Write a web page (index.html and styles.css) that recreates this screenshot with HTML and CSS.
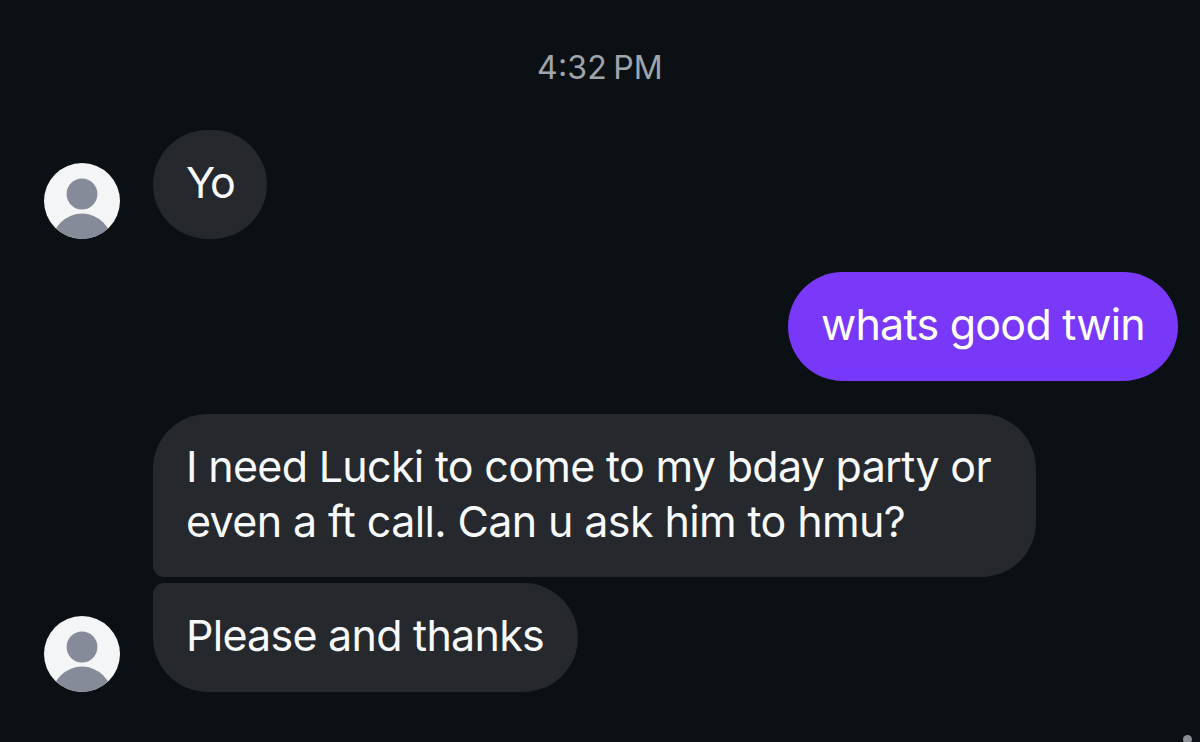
FILE: index.html
```html
<!DOCTYPE html>
<html lang="en">
<head>
    <meta charset="UTF-8">
    <title>Messages</title>
    <link rel="stylesheet" href="styles.css">
</head>
<body>

    <main class="chat">
        <div class="timestamp">4<span class="colon">:</span>32 PM</div>

        <div class="row">
            <svg class="avatar" viewBox="0 0 76 76">
                <clipPath id="circle"><circle cx="38" cy="38" r="38"/></clipPath>
                <g clip-path="url(#circle)">
                    <rect class="avatar-bg" width="76" height="76"/>
                    <circle class="avatar-person" cx="38" cy="31" r="15.4"/>
                    <circle class="avatar-person" cx="38" cy="80.8" r="30.2"/>
                </g>
            </svg>
            <div class="bubble short"><span class="yo">Yo</span></div>
        </div>

        <div class="row sent">
            <div class="bubble">whats good twin</div>
        </div>

        <div class="row">
            <div class="bubble first">I need Lucki to come to my bday party or<br><span class="second-line">even a ft call. Can u ask him to hmu?</span></div>
        </div>

        <div class="row">
            <svg class="avatar" viewBox="0 0 76 76">
                <g clip-path="url(#circle)">
                    <rect class="avatar-bg" width="76" height="76"/>
                    <circle class="avatar-person" cx="38" cy="31" r="15.4"/>
                    <circle class="avatar-person" cx="38" cy="80.8" r="30.2"/>
                </g>
            </svg>
            <div class="bubble last">Please and thanks</div>
        </div>

        <span class="status-dot"></span>
    </main>

</body>
</html>
```

FILE: styles.css
```css
* {
    box-sizing: border-box;
}

body {
    margin: 0;
    background-color: #0b1014;
    color: #f8f9fb;
    font-family: Inter, "Liberation Sans", sans-serif;
}

.chat {
    position: relative;
    width: 1200px;
    height: 742px;
    padding: 48px 22px 0 44px;
    overflow: hidden;
}

.timestamp {
    height: 82px;
    margin-left: -22px;
    color: #a0a5ad;
    font-size: 32px;
    line-height: 40px;
    letter-spacing: 0.2px;
    word-spacing: -3px;
    text-align: center;
}

.colon {
    font-feature-settings: "case";
}

.row {
    display: flex;
    align-items: flex-end;
    gap: 33px;
    margin-bottom: 33px;
    padding-left: 109px;
}

.row:has(.avatar) {
    padding-left: 0;
}

.sent {
    justify-content: flex-end;
}

.avatar {
    width: 76px;
    height: 76px;
    flex: none;
}

.avatar-bg {
    fill: #f3f5f7;
}

.avatar-person {
    fill: #858b98;
}

.bubble {
    width: 425px;
    padding: 25px 33px 29px;
    border-radius: 54.5px;
    background-color: #25282d;
    font-size: 43px;
    line-height: 55px;
    letter-spacing: -0.75px;
    white-space: nowrap;
}

.short {
    width: 114px;
}

.yo {
    letter-spacing: -2px;
}

.sent .bubble {
    width: 390px;
    background: linear-gradient(#7c38f8, #7638fa);
    color: #fff;
}

.first {
    width: 883px;
    height: 163px;
    border-bottom-left-radius: 11px;
    letter-spacing: -0.7px;
}

.second-line {
    letter-spacing: -0.62px;
}

.last {
    border-top-left-radius: 11px;
}

.row:has(.first) {
    margin-bottom: 6px;
}

.status-dot {
    position: absolute;
    left: 1183px;
    top: 735px;
    width: 9px;
    height: 9px;
    border-radius: 50%;
    background-color: #8b9097;
}
```
